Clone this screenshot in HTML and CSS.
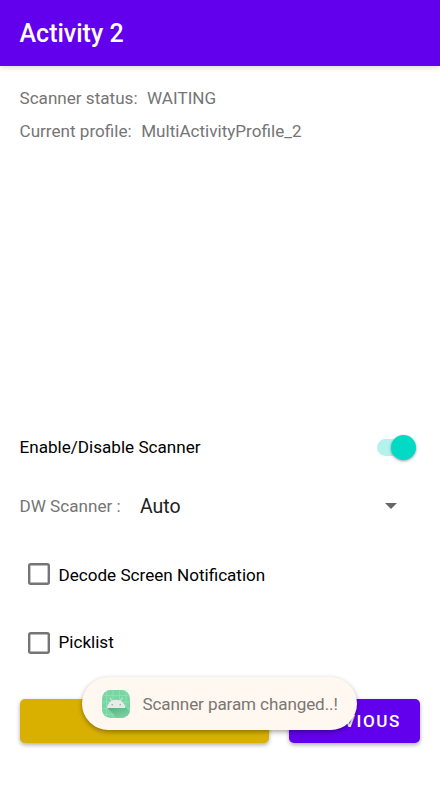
FILE: index.html
```html
<!DOCTYPE html>
<html lang="en">
<head>
<meta charset="utf-8">
<title>Activity 2</title>
<link rel="stylesheet" href="styles.css">
</head>
<body>
<header class="app-bar"><h1>Activity 2</h1></header>
<main class="content">
  <section class="status">
    <div class="status-row"><span class="status-label">Scanner status:</span><span>WAITING</span></div>
    <div class="status-row"><span class="status-label">Current profile:</span><span>MultiActivityProfile_2</span></div>
  </section>
  <section class="controls">
    <div class="switch-row">
      <span>Enable/Disable Scanner</span>
      <span class="switch"><span class="thumb"></span></span>
    </div>
    <div class="select-row">
      <span class="select-label">DW Scanner :</span>
      <span class="select-value">Auto</span>
      <svg class="caret" width="12" height="6" viewBox="0 0 12 6"><path d="M0 0h12L6 6z" fill="#666"/></svg>
    </div>
    <div class="check-row"><svg class="box" width="22" height="22"><rect x="1.200" y="1.200" width="19.600" height="19.600" rx="1.500"/></svg><span class="check-label">Decode Screen Notification</span></div>
    <div class="check-row"><svg class="box" width="22" height="22"><rect x="1.200" y="1.200" width="19.600" height="19.600" rx="1.500"/></svg><span>Picklist</span></div>
  </section>
  <footer class="actions">
    <button class="btn scan" aria-label="Scan"></button>
    <button class="btn previous">PREVIOUS</button>
  </footer>
</main>
<div class="toast">
  <svg class="app-icon" width="28" height="28" viewBox="0 0 28 28">
    <defs>
      <clipPath id="tile"><rect width="28" height="28" rx="8.5"/></clipPath>
      <linearGradient id="shade" x1="0" y1="0" x2=".7" y2="1"><stop offset="0" stop-color="#57a97d"/><stop offset="1" stop-color="#78d6a2"/></linearGradient>
    </defs>
    <g clip-path="url(#tile)">
      <rect width="28" height="28" fill="#78d6a2"/>
      <path d="M4.500 0v28M11 0v28M17.500 0v28M24 0v28M0 5.500h28M0 12h28M0 18.500h28M0 24.500h28" stroke="#a5e3c0" stroke-width=".5"/>
      <path d="M5.500 18L15 28h13v-6l-4.500-5z" fill="url(#shade)"/>
      <path d="M5 18a9.200 8.300 0 0 1 18.400 0z" fill="#e8eae7"/>
      <path d="M8.300 8l2 3.400M20.100 8l-2 3.400" stroke="#e8eae7" stroke-width="1" stroke-linecap="round"/>
      <circle cx="10.200" cy="14.700" r=".8" fill="#78b997"/>
      <circle cx="18.200" cy="14.700" r=".8" fill="#78b997"/>
    </g>
  </svg>
  <span class="toast-text">Scanner param changed..!</span>
</div>
</body>
</html>
```
FILE: styles.css
```css
* { box-sizing: border-box; }
body {
  margin: 0;
  height: 787px;
  display: flex;
  flex-direction: column;
  overflow: hidden;
  background: #fff;
  color: #000;
  font: 17.1px/23px Roboto, sans-serif;
}
.app-bar {
  height: 66px;
  padding: 1px 19.500px 0;
  display: flex;
  align-items: center;
  background: #6200ee;
  color: #fff;
  box-shadow: 0 2px 5px rgba(0, 0, 0, .13);
}
h1 { margin: 0; font-size: 25px; font-weight: 500; line-height: 30px; }
.content { flex: 1; display: flex; flex-direction: column; padding: 20.500px 20px 44px 19.500px; }
.status { color: #757575; display: flex; flex-direction: column; gap: 10px; }
.status-row { display: flex; gap: 9.500px; }
.controls { margin-top: auto; display: flex; flex-direction: column; }
.switch-row { display: flex; align-items: center; justify-content: space-between; height: 58px; }
.switch {
  display: flex;
  align-items: center;
  justify-content: flex-end;
  width: 35px;
  height: 17px;
  margin-right: 8px;
  border-radius: 9px;
  background: #b3f3ec;
}
.thumb {
  flex: none;
  width: 25px;
  height: 25px;
  margin-right: -4px;
  border-radius: 50%;
  background: #03dac5;
  box-shadow: 0 1px 3px rgba(0, 0, 0, .4);
}
.select-row { display: flex; align-items: center; height: 60px; margin-bottom: 4px; color: #757575; }
.select-label { width: 120.500px; padding-top: 1px; }
.select-value { flex: 1; padding-top: 1px; color: #212121; font-size: 19.500px; }
.caret { margin-right: 23px; }
.check-row { display: flex; align-items: center; gap: 8.500px; height: 68.500px; padding-left: 8.500px; }
.check-label { padding-top: 2px; }
.box { fill: none; stroke: #757575; stroke-width: 2.400px; }
.actions { display: flex; gap: 20px; margin-top: 22px; }
.btn {
  height: 44px;
  border: 0;
  border-radius: 5px;
  box-shadow: 0 2px 4px rgba(0, 0, 0, .32);
  color: #fff;
  font: 500 17.1px/20px Roboto, sans-serif;
  letter-spacing: 1.530px;
}
.scan { flex: 1; background: #dab000; }
.previous { width: 131px; padding: 0; background: #6200ee; }
.toast {
  position: absolute;
  left: 82px;
  top: 677px;
  width: 275px;
  height: 53px;
  padding-left: 20px;
  display: flex;
  align-items: center;
  gap: 12.500px;
  border-radius: 27px;
  background: #fff8f1;
  color: #7c7671;
  box-shadow: 0 2px 5px rgba(0, 0, 0, .35);
  white-space: nowrap;
}
.toast-text { padding-top: 2px; letter-spacing: -.12px; }
```
